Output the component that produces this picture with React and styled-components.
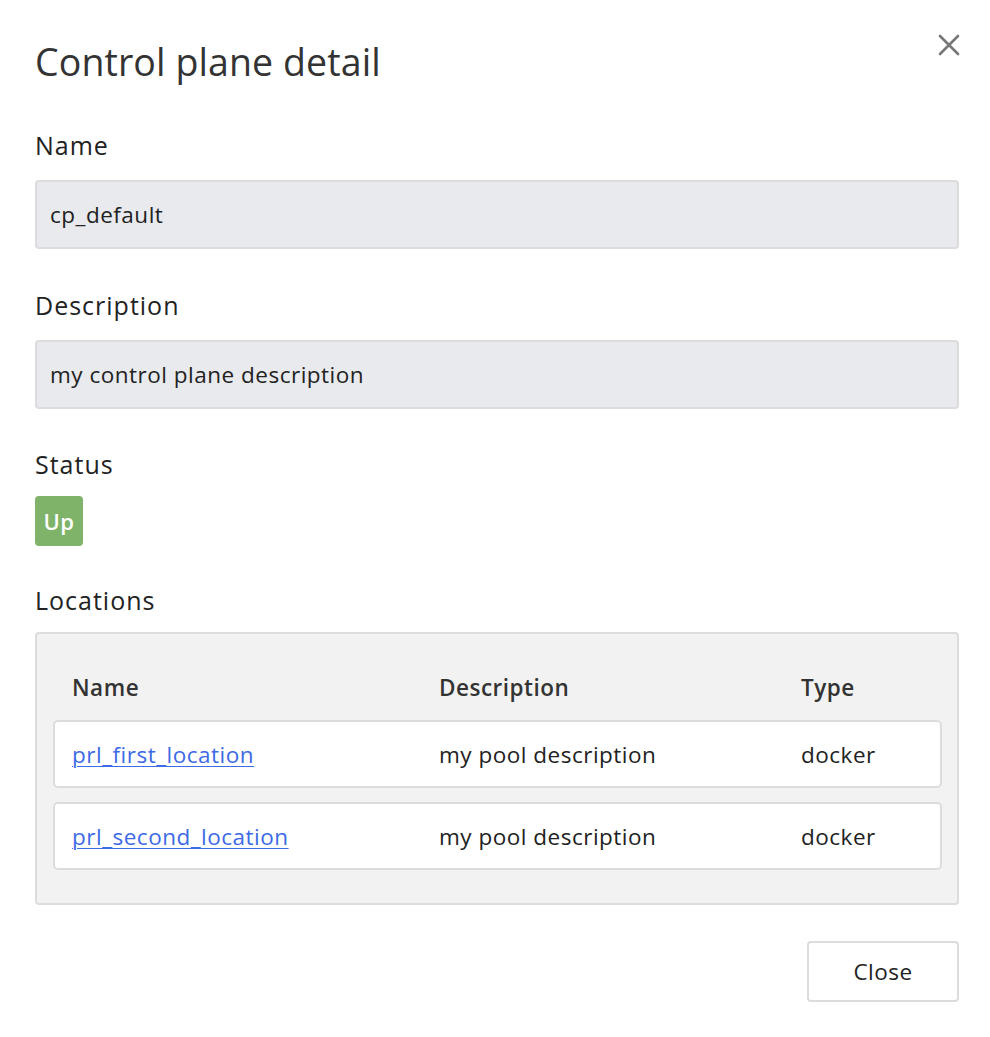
import React from "react";
import styled, { createGlobalStyle } from "styled-components";

const GlobalStyle = createGlobalStyle`
  html, body {
    margin: 0;
    padding: 0;
    background: #fff;
  }
  body {
    font-family: "Open Sans", "Noto Sans", sans-serif;
    color: #333;
  }
`;

const Modal = styled.div`
  width: 990px;
  min-height: 1037px;
  box-sizing: border-box;
  padding: 40px 31px 35px 35px;
  background: #fff;
  display: flex;
  flex-direction: column;
`;

const Header = styled.div`
  display: flex;
  justify-content: space-between;
  align-items: flex-start;
`;

const Title = styled.h1`
  margin: 0;
  font-size: 37.5px;
  font-weight: 400;
  line-height: 43px;
  color: #333;
  letter-spacing: 0.1px;
`;

const CloseIcon = styled.button`
  border: none;
  background: none;
  padding: 0;
  margin: -7px -2px 0 0;
  width: 24px;
  height: 24px;
  display: flex;
  align-items: center;
  justify-content: center;
  cursor: pointer;
`;

const Field = styled.div`
  display: flex;
  flex-direction: column;
  margin-top: ${(p) => p.$top || "42px"};
`;

const Label = styled.div`
  font-size: 25px;
  line-height: 29px;
  letter-spacing: 1px;
  color: #222;
  margin-bottom: ${(p) => p.$gap || "20px"};
`;

const ReadOnly = styled.div`
  height: 69px;
  box-sizing: border-box;
  display: flex;
  align-items: center;
  padding: 0 13px;
  background: #e9eaed;
  border: 2px solid #dcdcdc;
  border-radius: 4px;
  font-size: 22.5px;
  letter-spacing: 0.5px;
  color: #222;
`;

const Badge = styled.span`
  display: inline-flex;
  align-items: center;
  justify-content: center;
  width: 48px;
  height: 50px;
  border-radius: 4px;
  background: #7fb369;
  color: #fff;
  font-size: 22px;
  font-weight: 600;
  letter-spacing: 0.5px;
`;

const TableBox = styled.div`
  background: #f2f2f2;
  border: 2px solid #dcdcdc;
  border-radius: 4px;
  padding: 32px 15px 33px 16px;
  display: flex;
  flex-direction: column;
  gap: 14px;
`;

const Grid = styled.div`
  display: grid;
  grid-template-columns: 367px 362px 1fr;
  align-items: center;
  padding: 0 17px;
  border: 2px solid ${(p) => (p.$head ? "transparent" : "#dcdcdc")};
  border-radius: 5px;
  background: ${(p) => (p.$head ? "transparent" : "#fff")};
  height: ${(p) => (p.$head ? "42px" : "68px")};
  box-sizing: border-box;
  margin-bottom: ${(p) => (p.$head ? "-2px" : "0")};
  font-size: 22.5px;
  letter-spacing: 0.5px;
  font-weight: ${(p) => (p.$head ? 600 : 400)};
  color: ${(p) => (p.$head ? "#333" : "#222")};
`;

const Link = styled.a`
  color: #3d6ae6;
  text-decoration: underline;
  text-underline-offset: 3px;
  text-decoration-thickness: 1px;
`;

const Footer = styled.div`
  display: flex;
  justify-content: flex-end;
  margin-top: 36px;
`;

const Button = styled.button`
  width: 152px;
  height: 61px;
  background: #fff;
  border: 2px solid #dcdcdc;
  border-radius: 4px;
  font-family: inherit;
  font-size: 22.5px;
  letter-spacing: 0.5px;
  color: #222;
  cursor: pointer;
`;

const locations = [
  { name: "prl_first_location", description: "my pool description", type: "docker" },
  { name: "prl_second_location", description: "my pool description", type: "docker" },
];

export default function App() {
  return (
    <>
      <GlobalStyle />
      <Modal>
        <Header>
          <Title>Control plane detail</Title>
          <CloseIcon aria-label="Close">
            <svg width="22" height="22" viewBox="0 0 22 22">
              <path d="M2 2 L20 20 M20 2 L2 20" stroke="#777" strokeWidth="2.6" strokeLinecap="round" />
            </svg>
          </CloseIcon>
        </Header>

        <Field $top="48px">
          <Label>Name</Label>
          <ReadOnly>cp_default</ReadOnly>
        </Field>

        <Field $top="42px">
          <Label>Description</Label>
          <ReadOnly>my control plane description</ReadOnly>
        </Field>

        <Field $top="41px">
          <Label $gap="17px">Status</Label>
          <div>
            <Badge>Up</Badge>
          </div>
        </Field>

        <Field $top="40px">
          <Label $gap="17px">Locations</Label>
          <TableBox>
            <Grid $head>
              <span>Name</span>
              <span>Description</span>
              <span>Type</span>
            </Grid>
            {locations.map((loc) => (
              <Grid key={loc.name}>
                <span>
                  <Link href="#">{loc.name}</Link>
                </span>
                <span>{loc.description}</span>
                <span>{loc.type}</span>
              </Grid>
            ))}
          </TableBox>
        </Field>

        <Footer>
          <Button>Close</Button>
        </Footer>
      </Modal>
    </>
  );
}
